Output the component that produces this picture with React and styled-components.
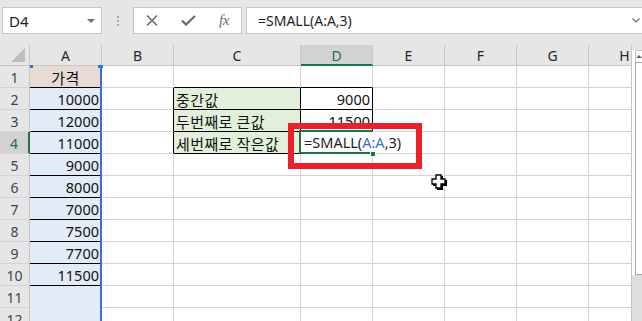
import React from 'react';
import styled, { createGlobalStyle } from 'styled-components';

const GREEN = '#217346';
const GRID = '#d4d4d4';
const HEAD_LINE = '#c6c6c6';
const FONT = `"Noto Sans", "Noto Sans CJK KR", sans-serif`;
const KFONT = `"Noto Sans CJK KR", "Noto Sans", sans-serif`;

const GlobalStyle = createGlobalStyle`
  html, body { margin: 0; padding: 0; background: #fff; overflow: hidden; }
  * { box-sizing: border-box; }
`;

const Window = styled.div`
  width: 642px;
  height: 321px;
  overflow: hidden;
  display: flex;
  flex-direction: column;
  font-family: ${FONT};
  background: #fff;
`;

/* ---------- formula toolbar ---------- */

const Toolbar = styled.div`
  height: 45px;
  flex: none;
  background: #e6e6e6;
  display: flex;
  align-items: flex-start;
  padding: 7px 0 0 2px;
`;

const NameBox = styled.div`
  width: 100px;
  height: 27px;
  background: #fff;
  border: 1px solid ${HEAD_LINE};
  display: flex;
  align-items: center;
  justify-content: space-between;
  padding: 0 6px 0 6px;
  font-size: 15px;
  color: #1e1e1e;
`;

const Caret = styled.span`
  width: 0;
  height: 0;
  border-left: 4px solid transparent;
  border-right: 4px solid transparent;
  border-top: 4px solid #707070;
`;

const Grip = styled.div`
  width: 31px;
  height: 27px;
  display: flex;
  flex-direction: column;
  align-items: center;
  justify-content: center;
  gap: 2px;
`;

const GripDot = styled.span`
  width: 2px;
  height: 2px;
  background: #ababab;
`;

const FxButtons = styled.div`
  width: 109px;
  height: 27px;
  background: #fff;
  border: 1px solid ${HEAD_LINE};
  display: grid;
  grid-template-columns: 36px 36px 36px;
  align-items: center;
  justify-items: center;
  color: #6b6b6b;
`;

const FxLabel = styled.span`
  font-family: "Liberation Serif", serif;
  font-style: italic;
  font-size: 15px;
  color: #6b6b6b;
  letter-spacing: -0.5px;
`;

const FormulaBar = styled.div`
  flex: 1;
  margin-left: 4px;
  height: 27px;
  background: #fff;
  border: 1px solid ${HEAD_LINE};
  border-right: none;
  display: flex;
  align-items: center;
  justify-content: space-between;
  padding: 0 2px 0 11px;
  font-size: 14px;
  color: #1e1e1e;
`;

/* ---------- sheet ---------- */

const Sheet = styled.div`
  flex: 1;
  display: flex;
  overflow: hidden;
`;

const GridWrap = styled.div`
  position: relative;
  width: 631px;
  flex: none;
  overflow: hidden;
`;

const Grid = styled.div`
  display: grid;
  grid-template-columns: 30px 72px 72px 127px 72px 72px 72px 72px 72px;
  grid-template-rows: 21px repeat(12, 22px);
`;

const Corner = styled.div`
  background: #e6e6e6;
  border-right: 1px solid ${HEAD_LINE};
  border-bottom: 1px solid ${HEAD_LINE};
  position: relative;
  &::after {
    content: '';
    position: absolute;
    right: 4px;
    bottom: 3px;
    width: 0;
    height: 0;
    border-left: 14px solid transparent;
    border-bottom: 14px solid #bdbdbd;
  }
`;

const ColHead = styled.div`
  background: ${p => (p.$active ? '#d2d2d2' : '#e6e6e6')};
  color: ${p => (p.$active ? GREEN : '#262626')};
  border-right: 1px solid ${HEAD_LINE};
  border-bottom: ${p => (p.$active ? `2px solid ${GREEN}` : `1px solid ${HEAD_LINE}`)};
  display: flex;
  align-items: center;
  justify-content: center;
  font-size: 14px;
  padding-top: 1px;
`;

const RowHead = styled.div`
  background: ${p => (p.$active ? '#d2d2d2' : '#e6e6e6')};
  color: ${p => (p.$active ? GREEN : '#444')};
  border-right: ${p => (p.$active ? `2px solid ${GREEN}` : `1px solid ${HEAD_LINE}`)};
  border-bottom: 1px solid ${GRID};
  display: flex;
  align-items: center;
  justify-content: center;
  font-size: 14px;
  padding-top: 1px;
`;

const Cell = styled.div`
  position: relative;
  background: ${p => p.$fill || '#fff'};
  border-right: 1px solid ${p => p.$br || p.$fill || GRID};
  border-bottom: 1px solid ${p => p.$bb || p.$fill || GRID};
  display: flex;
  align-items: center;
  justify-content: ${p => (p.$align === 'right' ? 'flex-end' : p.$align === 'center' ? 'center' : 'flex-start')};
  padding: 1px 2px 0 2px;
  font-family: ${p => (p.$korean ? KFONT : FONT)};
  font-size: ${p => (p.$korean ? '15px' : '14.5px')};
  letter-spacing: ${p => (p.$korean ? '0.4px' : '0')};
  color: #111;
  white-space: nowrap;
  overflow: ${p => (p.$editing ? 'visible' : 'hidden')};
  z-index: ${p => (p.$editing ? 3 : 'auto')};
`;

const EditFrame = styled.div`
  position: absolute;
  left: -2px;
  top: -2px;
  width: 74px;
  height: 24px;
  border: 2px solid ${GREEN};
  border-right: none;
`;

const EditText = styled.span`
  position: absolute;
  left: 0;
  top: 0;
  height: 20px;
  padding: 0 6px 0 3px;
  display: flex;
  align-items: center;
  background: #fff;
  font-family: ${FONT};
  font-size: 14.5px;
  color: #1e1e1e;
  white-space: nowrap;
`;

const RefText = styled.span`
  color: #3d6fd1;
`;

const FillHandle = styled.span`
  position: absolute;
  right: -3px;
  bottom: -5px;
  width: 6px;
  height: 6px;
  background: ${GREEN};
  border: 1px solid #fff;
`;

const ColumnRef = styled.div`
  position: absolute;
  left: 30px;
  top: 21px;
  width: 72px;
  bottom: 0;
  border-right: 2px solid #3d6fd1;
  pointer-events: none;
  &::before,
  &::after {
    content: '';
    position: absolute;
    top: -1px;
    width: 3px;
    height: 3px;
    background: #3d6fd1;
  }
  &::before { left: 0; }
  &::after { right: -3px; width: 5px; }
`;

const Highlight = styled.div`
  position: absolute;
  left: 288px;
  top: 78px;
  width: 134px;
  height: 46px;
  border: 6px solid #e8212b;
  z-index: 5;
  pointer-events: none;
`;

const Pointer = styled.svg`
  position: absolute;
  left: 431px;
  top: 129px;
  z-index: 6;
`;

/* ---------- scrollbar ---------- */

const Scrollbar = styled.div`
  width: 11px;
  flex: none;
  border-left: 1px solid ${HEAD_LINE};
  background: #fff;
  display: flex;
  flex-direction: column;
`;

const ScrollGap = styled.div`
  height: 5px;
  background: #e6e6e6;
`;

const ScrollUp = styled.div`
  height: 12px;
  margin-left: 3px;
  border-left: 1px solid ${HEAD_LINE};
  border-top: 1px solid ${HEAD_LINE};
  display: flex;
  align-items: center;
  justify-content: center;
  &::after {
    content: '';
    border-left: 3px solid transparent;
    border-right: 3px solid transparent;
    border-bottom: 3px solid #606060;
  }
`;

const Thumb = styled.div`
  height: 213px;
  margin-left: 3px;
  border: 1px solid #a6a6a6;
  border-right: none;
  background: #fff;
`;

const Track = styled.div`
  flex: 1;
  background: #dedede;
`;

/* ---------- data ---------- */

const COLS = ['A', 'B', 'C', 'D', 'E', 'F', 'G', 'H'];
const PRICES = [10000, 12000, 11000, 9000, 8000, 7000, 7500, 7700, 11500];
const LABELS = ['중간값', '두번째로 큰값', '세번째로 작은값'];
const RESULTS = ['9000', '11500'];

const BLUE = '#e2ebf6';
const PEACH = '#e8dad4';
const LIGHT_GREEN = '#e2efda';

function cellProps(row, col) {
  const p = {};
  if (col === 'A') {
    p.$fill = row === 1 ? PEACH : BLUE;
    if (row <= 10) p.$bb = '#000';
    if (row === 1) {
      p.$align = 'center';
      p.$korean = true;
      p.children = '가격';
    } else if (row <= 10) {
      p.$align = 'right';
      p.children = PRICES[row - 2];
    }
  }
  if ((col === 'C' || col === 'D') && row === 1) p.$bb = '#000';
  if (col === 'B' && row >= 2 && row <= 4) p.$br = '#000';
  if (col === 'C' && row >= 2 && row <= 4) {
    p.$fill = LIGHT_GREEN;
    p.$bb = '#000';
    p.$br = '#000';
    p.$korean = true;
    p.children = LABELS[row - 2];
  }
  if (col === 'D' && row >= 2 && row <= 4) {
    p.$bb = '#000';
    p.$br = '#000';
    p.$align = 'right';
    if (row < 4) p.children = RESULTS[row - 2];
    else p.$editing = true;
  }
  return p;
}

const CloseIcon = () => (
  <svg width="12" height="11" viewBox="0 0 12 11">
    <path d="M1 0.5 L11 10.5 M11 0.5 L1 10.5" stroke="#6b6b6b" strokeWidth="1.5" fill="none" />
  </svg>
);

const CheckIcon = () => (
  <svg width="15" height="11" viewBox="0 0 15 11">
    <path d="M1 5.5 L5 9.5 L14 1" stroke="#6b6b6b" strokeWidth="2.3" fill="none" />
  </svg>
);

const Chevron = () => (
  <svg width="8" height="5" viewBox="0 0 8 5">
    <path d="M0.5 0.5 L4 4 L7.5 0.5" stroke="#707070" strokeWidth="1.2" fill="none" />
  </svg>
);

const PlusCursor = () => (
  <Pointer width="18" height="18" viewBox="0 0 18 18">
    <polygon points="6,2 12,2 12,6 16,6 16,12 12,12 12,16 6,16 6,12 2,12 2,6 6,6" fill="#000" />
    <polygon points="5,1 10,1 10,5 14,5 14,10 10,10 10,14 5,14 5,10 1,10 1,5 5,5" fill="#fff" stroke="#000" strokeWidth="1.3" />
  </Pointer>
);

export default function App() {
  return (
    <Window>
      <GlobalStyle />
      <Toolbar>
        <NameBox>
          D4
          <Caret />
        </NameBox>
        <Grip>
          <GripDot />
          <GripDot />
          <GripDot />
        </Grip>
        <FxButtons>
          <CloseIcon />
          <CheckIcon />
          <FxLabel>fx</FxLabel>
        </FxButtons>
        <FormulaBar>
          =SMALL(A:A,3)
          <Chevron />
        </FormulaBar>
      </Toolbar>

      <Sheet>
        <GridWrap>
          <Grid>
            <Corner />
            {COLS.map(c => (
              <ColHead key={c} $active={c === 'D'}>{c}</ColHead>
            ))}
            {Array.from({ length: 12 }, (_, i) => i + 1).map(row => (
              <React.Fragment key={row}>
                <RowHead $active={row === 4}>{row}</RowHead>
                {COLS.map(col => {
                  const { children, ...rest } = cellProps(row, col);
                  return (
                    <Cell key={col} {...rest}>
                      {rest.$editing ? (
                        <EditFrame>
                          <EditText>
                            =SMALL(<RefText>A:A</RefText>,3)
                          </EditText>
                          <FillHandle />
                        </EditFrame>
                      ) : (
                        children
                      )}
                    </Cell>
                  );
                })}
              </React.Fragment>
            ))}
          </Grid>
          <ColumnRef />
          <Highlight />
          <PlusCursor />
        </GridWrap>
        <Scrollbar>
          <ScrollGap />
          <ScrollUp />
          <Thumb />
          <Track />
        </Scrollbar>
      </Sheet>
    </Window>
  );
}
